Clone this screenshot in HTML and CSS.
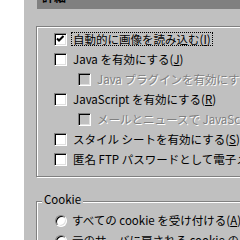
FILE: index.html
```html
<!DOCTYPE html>
<html lang="ja">
<head>
  <meta charset="UTF-8">
  <title>詳細</title>
  <link rel="stylesheet" href="styles.css">
</head>
<body>
  <div class="sidebar"></div>

  <div class="panel">
    <div class="titlebar">
      <h2>詳細</h2>
    </div>

    <!-- General options -->
    <div class="group">
      <div class="row">
        <span class="check">
          <svg width="11" height="11" viewBox="0 0 11 11"><polyline points="2,4.5 4,6.5 8.5,2" fill="none" stroke="#000" stroke-width="2"/></svg>
        </span>
        <span class="label focus">自動的に画像を読み込む(<u>I</u>)</span>
      </div>
      <div class="row">
        <span class="check"></span>
        <span class="label">Java を有効にする(<u>J</u>)</span>
      </div>
      <div class="row sub disabled">
        <span class="check"></span>
        <span class="label">Java プラグインを有効にする(<u>P</u>)</span>
      </div>
      <div class="row">
        <span class="check"></span>
        <span class="label">JavaScript を有効にする(<u>R</u>)</span>
      </div>
      <div class="row sub disabled">
        <span class="check"></span>
        <span class="label">メールとニュースで JavaScript を有効にする(<u>M</u>)</span>
      </div>
      <div class="row">
        <span class="check"></span>
        <span class="label">スタイル シートを有効にする(<u>S</u>)</span>
      </div>
      <div class="row">
        <span class="check"></span>
        <span class="label">匿名 FTP パスワードとして電子メール アドレスを送信する(<u>F</u>)</span>
      </div>
    </div>

    <!-- Cookie options -->
    <fieldset class="cookies">
      <legend>Cookie</legend>
      <div class="radios">
        <div class="row">
          <span class="radio"></span>
          <span class="label">すべての cookie を受け付ける(<u>A</u>)</span>
        </div>
        <div class="row">
          <span class="radio"></span>
          <span class="label">元のサーバに戻される cookie のみ受け付ける(<u>O</u>)</span>
        </div>
      </div>
    </fieldset>
  </div>
</body>
</html>
```

FILE: styles.css
```css
:root {
  --face: #c0c0c0;
  --shadow: #808080;
  --light: #dfdfdf;
}

html, body {
  margin: 0;
  height: 100%;
  overflow: hidden;
}

body {
  display: flex;
  background-color: var(--face);
  color: #000;
  font-family: "Noto Sans CJK JP", "Liberation Sans", sans-serif;
  font-size: 11.5px;
}

.sidebar {
  flex: none;
  width: 24px;
  background-color: #fff;
}

.panel {
  flex: none;
  width: 420px;
  padding-left: 12px;
}

.titlebar {
  height: 9px;
  margin-left: 1px;
  padding-left: 5px;
  background-color: var(--shadow);
  overflow: hidden;
}

.titlebar h2 {
  margin: -9px 0 0;
  font-size: 12px;
  line-height: 12px;
  font-weight: bold;
}

/* Etched group boxes */
.group {
  margin-top: 17px;
  padding: 3px 0 6px 17px;
  border: 1px solid var(--shadow);
  box-shadow: 1px 1px 0 #fff, inset 1px 1px 0 #fff;
}

.row {
  display: flex;
  align-items: flex-start;
  height: 20px;
  white-space: nowrap;
}

.row.sub {
  padding-left: 24px;
}

.check {
  flex: none;
  box-sizing: border-box;
  width: 13px;
  height: 13px;
  margin-top: 3px;
  background-color: #fff;
  border: 1px solid;
  border-color: var(--shadow) #fff #fff var(--shadow);
  box-shadow: inset 1px 1px 0 #000, inset -1px -1px 0 var(--light);
}

.check svg {
  display: block;
}

.label {
  margin: 2px 0 0 4px;
  padding: 0 2px;
  line-height: 14px;
  height: 14px;
}

.label u {
  text-underline-offset: 1px;
}

.focus {
  outline: 1px dotted #000;
  outline-offset: -1px;
}

.disabled .check {
  background-color: var(--face);
}

.disabled .label {
  color: var(--shadow);
  text-shadow: 1px 1px 0 #fff;
}

.cookies {
  margin: 16px 0 0;
  padding: 0;
  min-width: 0;
  border: 1px solid var(--shadow);
  box-shadow: 1px 1px 0 #fff, inset 1px 1px 0 #fff;
}

.cookies legend {
  margin-left: 5px;
  padding: 0 2px 3px;
  line-height: 13px;
  background-color: var(--face);
}

.radios {
  padding: 2px 0 0 18px;
}

.radio {
  flex: none;
  box-sizing: border-box;
  width: 12px;
  height: 12px;
  margin-top: 4px;
  border-radius: 50%;
  background-color: #fff;
  border: 1px solid;
  border-color: var(--shadow) #fff #fff var(--shadow);
  box-shadow: inset 1px 1px 0 #000, inset -1px -1px 0 var(--light);
}

.radios .label {
  margin-left: 3px;
}
```
